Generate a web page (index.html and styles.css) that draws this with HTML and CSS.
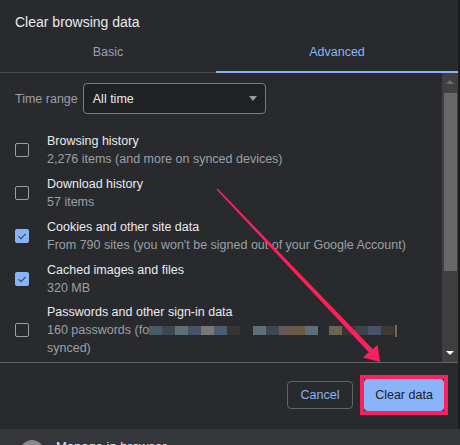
FILE: index.html
```html
<!DOCTYPE html>
<html>
<head>
<meta charset="utf-8">
<link rel="stylesheet" href="styles.css">
</head>
<body>
<div class="dialog">
  <div class="title">Clear browsing data</div>
  <div class="tabs">
    <div class="tab">Basic</div>
    <div class="tab active">Advanced</div>
  </div>
  <div class="body">
    <div class="content">
      <div class="range">
        <span class="range-label">Time range</span>
        <div class="select">
          <span>All time</span>
          <span class="caret"></span>
        </div>
      </div>
      <div class="row">
        <span class="cb"></span>
        <div class="text">
          <div class="name">Browsing history</div>
          <div class="sub">2,276 items (and more on synced devices)</div>
        </div>
      </div>
      <div class="row">
        <span class="cb"></span>
        <div class="text">
          <div class="name">Download history</div>
          <div class="sub">57 items</div>
        </div>
      </div>
      <div class="row">
        <span class="cb on"><svg viewBox="0 0 14 14" width="14" height="14"><path d="M3.5 7.2 L6 9.6 L10.6 4.8" fill="none" stroke="#3c4a63" stroke-width="1.2"/></svg></span>
        <div class="text">
          <div class="name">Cookies and other site data</div>
          <div class="sub">From 790 sites (you won't be signed out of your Google Account)</div>
        </div>
      </div>
      <div class="row">
        <span class="cb on"><svg viewBox="0 0 14 14" width="14" height="14"><path d="M3.5 7.2 L6 9.6 L10.6 4.8" fill="none" stroke="#3c4a63" stroke-width="1.2"/></svg></span>
        <div class="text">
          <div class="name">Cached images and files</div>
          <div class="sub">320 MB</div>
        </div>
      </div>
      <div class="row">
        <span class="cb"></span>
        <div class="text">
          <div class="name">Passwords and other sign-in data</div>
          <div class="sub">160 passwords (fo<span class="px p1"></span><span class="px p2"></span><span class="px p3"></span><span class="px p4"></span><span class="px p5"></span><span class="px p6"></span><span class="px p7"></span><span class="gap"></span><span class="px p3"></span><span class="px p2"></span><span class="px p8"></span><span class="px p9"></span><span class="px p3"></span><span class="gap small"></span><span class="px p10"></span><span class="px p7"></span><span class="px p11"></span><span class="px p4"></span><span class="px p12"></span>|<br>synced)</div>
        </div>
      </div>
    </div>
    <div class="scrollbar">
      <span class="arrow up"></span>
      <div class="thumb-area"><div class="thumb"></div></div>
      <span class="arrow down"></span>
    </div>
  </div>
  <div class="footer">
    <button class="btn cancel">Cancel</button>
    <span class="highlight"><button class="btn primary">Clear data</button></span>
  </div>
</div>
<div class="strip">
  <span class="avatar"></span>
  <span class="strip-text">Manage in browser</span>
</div>
<svg class="overlay" width="460" height="445" viewBox="0 0 460 445">
  <polygon points="216.4,189.6 217.6,188.4 373.8,350.3 370.2,353.7" fill="#ff1f5f"/>
  <polygon points="380,362 363,357.5 368,353 373.5,348.5 377.5,345" fill="#ff1f5f"/>
</svg>
</body>
</html>
```
FILE: styles.css
```css
html, body {
  margin: 0;
  padding: 0;
}
body {
  width: 460px;
  height: 445px;
  overflow: hidden;
  background: #1b1c1e;
  font-family: "Liberation Sans", Arial, sans-serif;
  position: relative;
}
.dialog {
  width: 458px;
  height: 429px;
  background: #292a2d;
  display: flex;
  flex-direction: column;
}
.title {
  height: 34px;
  box-sizing: border-box;
  padding: 13px 0 0 15px;
  font-size: 14px;
  color: #e8eaed;
  line-height: 18px;
}
.tabs {
  display: flex;
  height: 39px;
}
.tab {
  box-sizing: border-box;
  display: flex;
  align-items: center;
  justify-content: center;
  font-size: 12.5px;
  color: #9aa0a6;
  padding-bottom: 2px;
}
.tab:first-child {
  width: 216px;
  border-bottom: 1px solid #4a4c50;
}
.tab.active {
  flex: 1;
  color: #8ab4f8;
  border-bottom: 2px solid #8ab4f8;
  padding-bottom: 1px;
}
.body {
  display: flex;
  height: 289px;
  border-bottom: 1px solid #5f6368;
  overflow: hidden;
}
.content {
  flex: 1;
  padding: 10px 0 0 15px;
}
.range {
  display: flex;
  align-items: center;
  gap: 5px;
  margin-bottom: 14px;
}
.range-label {
  font-size: 12.5px;
  color: #9aa0a6;
}
.select {
  box-sizing: border-box;
  width: 183px;
  height: 31px;
  border: 1.5px solid #6a7d9c;
  border-radius: 4px;
  background: #202124;
  display: flex;
  align-items: center;
  justify-content: space-between;
  padding: 0 8px 0 9px;
  font-size: 12.5px;
  color: #e8eaed;
}
.caret {
  width: 0;
  height: 0;
  border-left: 4.5px solid transparent;
  border-right: 4.5px solid transparent;
  border-top: 5px solid #9aa0a6;
}
.row {
  display: flex;
  align-items: center;
  min-height: 43px;
}
.row:last-child {
  padding-top: 3px;
}
.cb {
  box-sizing: border-box;
  width: 14px;
  height: 14px;
  border: 1.5px solid #9aa0a6;
  border-radius: 2px;
  flex: none;
  display: block;
}
.cb.on {
  border: none;
  background: #8ab4f8;
}
.cb svg {
  display: block;
}
.text {
  margin-left: 18px;
  line-height: 18px;
}
.name {
  font-size: 12.5px;
  color: #e8eaed;
}
.sub {
  font-size: 12.5px;
  color: #9aa0a6;
}
.px {
  display: inline-block;
  width: 13px;
  height: 9px;
  vertical-align: -1px;
}
.gap {
  display: inline-block;
  width: 13px;
}
.gap.small {
  width: 11px;
}
.p1 { background: #4a5a66; }
.p2 { background: #3e4650; }
.p3 { background: #5d7078; }
.p4 { background: #4a5268; }
.p5 { background: #787878; }
.p6 { background: #4b5d6e; }
.p7 { background: #353535; }
.p8 { background: #6a5856; }
.p9 { background: #6a5a48; }
.p10 { background: #6a6452; }
.p11 { background: #3c444c; }
.p12 { background: #3e3a36; }
.scrollbar {
  width: 16px;
  background: #3f3f3f;
  display: flex;
  flex-direction: column;
  align-items: center;
}
.arrow {
  width: 0;
  height: 0;
  border-left: 4px solid transparent;
  border-right: 4px solid transparent;
  margin: 7px 0;
}
.arrow.up {
  border-bottom: 4px solid #6e6e6e;
}
.arrow.down {
  border-top: 4px solid #ffffff;
}
.thumb-area {
  flex: 1;
  width: 100%;
  display: flex;
  justify-content: center;
}
.thumb {
  width: 13px;
  height: 178px;
  margin-top: 2px;
  background: #686868;
}
.footer {
  flex: 1;
  display: flex;
  justify-content: flex-end;
  align-items: center;
  gap: 7px;
  padding: 0 10px 3px 0;
}
.btn {
  font-family: "Liberation Sans", Arial, sans-serif;
  font-size: 12.5px;
  border-radius: 4px;
  cursor: pointer;
}
.cancel {
  width: 66px;
  height: 28px;
  background: transparent;
  border: 1px solid #5f6368;
  color: #8ab4f8;
}
.highlight {
  display: block;
  border: 4px solid #ff1f5f;
}
.primary {
  display: block;
  width: 80px;
  height: 32px;
  background: #8ab4f8;
  border: none;
  color: #202124;
}
.strip {
  height: 16px;
  background: #35363a;
  display: flex;
  align-items: flex-start;
  padding-left: 20px;
  overflow: hidden;
}
.avatar {
  width: 24px;
  height: 24px;
  border-radius: 50%;
  background: #8a8a8a;
  margin-top: 11px;
  flex: none;
}
.strip-text {
  margin-left: 12px;
  margin-top: 10px;
  font-size: 13px;
  color: #e8eaed;
}
.overlay {
  position: absolute;
  left: 0;
  top: 0;
  pointer-events: none;
}
```
